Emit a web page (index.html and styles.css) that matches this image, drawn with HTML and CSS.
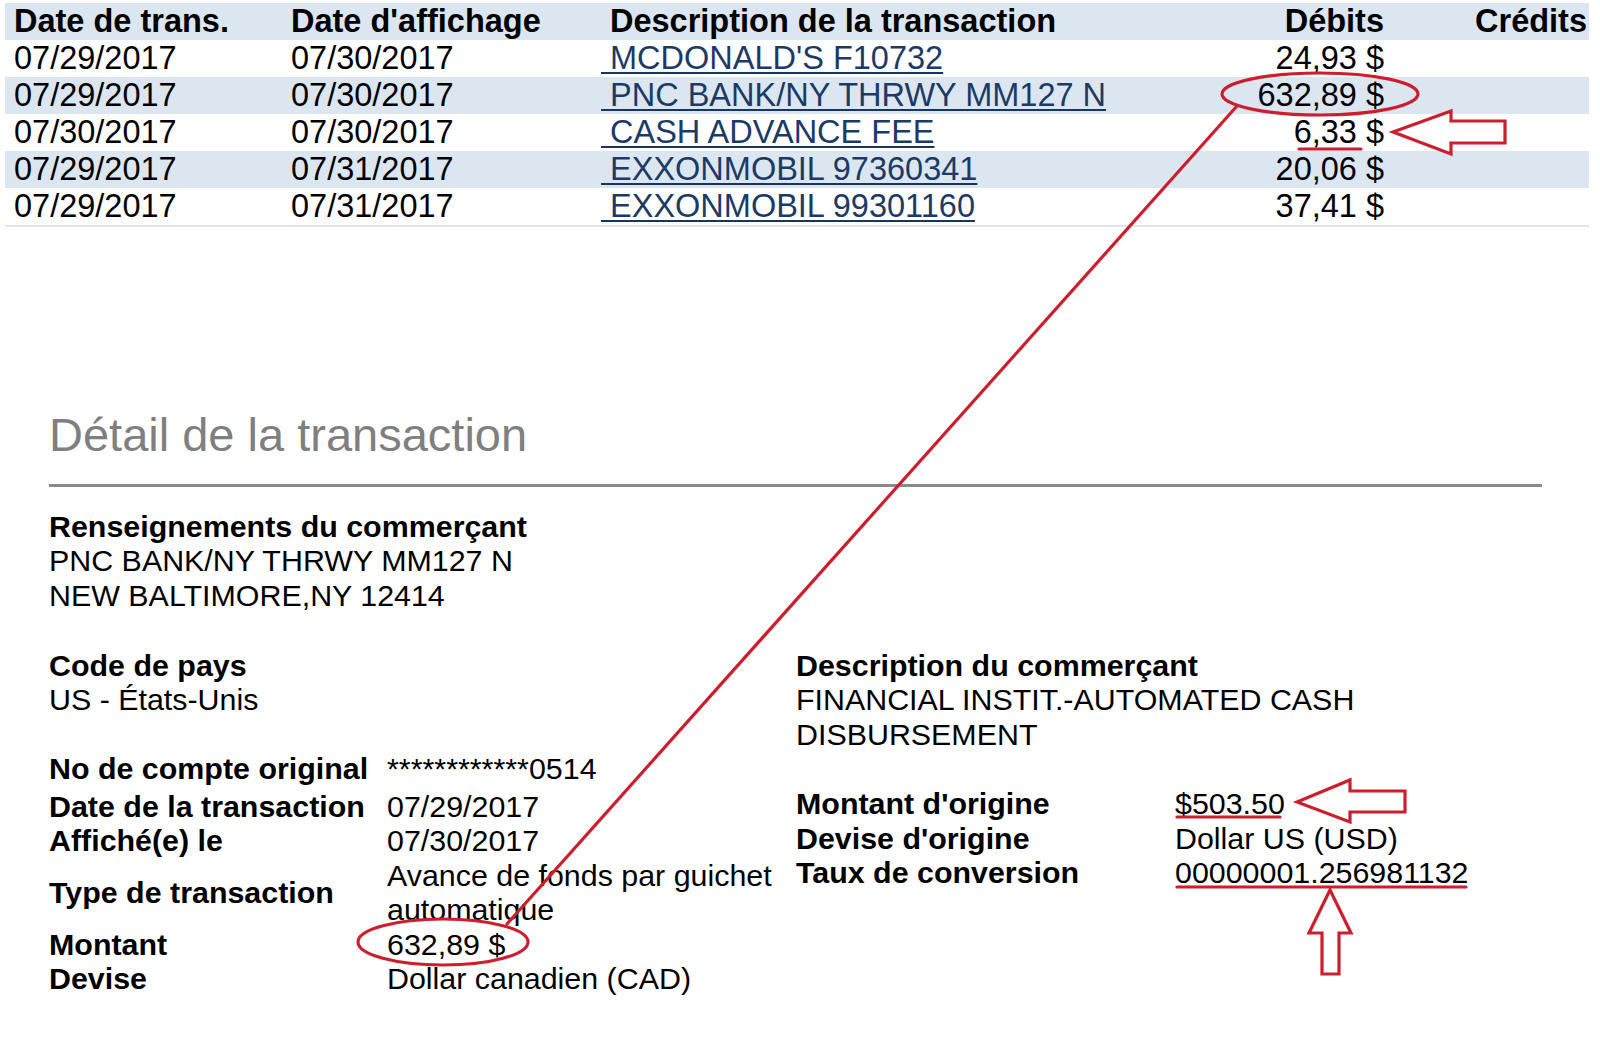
FILE: index.html
```html
<!DOCTYPE html>
<html lang="fr">
<head>
<meta charset="utf-8">
<title>Détail de la transaction</title>
<link rel="stylesheet" href="styles.css">
</head>
<body>
<div class="page">
  <table class="tx">
    <colgroup>
      <col class="c1"><col class="c2"><col class="c3"><col class="c4"><col class="c5">
    </colgroup>
    <thead>
      <tr>
        <th class="pad">Date de trans.</th>
        <th class="pad">Date d'affichage</th>
        <th class="pad">Description de la transaction</th>
        <th class="num">Débits</th>
        <th class="num">Crédits</th>
      </tr>
    </thead>
    <tbody>
      <tr>
        <td class="pad">07/29/2017</td><td class="pad">07/30/2017</td>
        <td><a href="#">&nbsp;MCDONALD'S F10732</a></td>
        <td class="num">24,93 $</td><td class="num"></td>
      </tr>
      <tr class="alt">
        <td class="pad">07/29/2017</td><td class="pad">07/30/2017</td>
        <td><a href="#">&nbsp;PNC BANK/NY THRWY MM127 N</a></td>
        <td class="num">632,89 $</td><td class="num"></td>
      </tr>
      <tr>
        <td class="pad">07/30/2017</td><td class="pad">07/30/2017</td>
        <td><a href="#">&nbsp;CASH ADVANCE FEE</a></td>
        <td class="num">6,33 $</td><td class="num"></td>
      </tr>
      <tr class="alt">
        <td class="pad">07/29/2017</td><td class="pad">07/31/2017</td>
        <td><a href="#">&nbsp;EXXONMOBIL 97360341</a></td>
        <td class="num">20,06 $</td><td class="num"></td>
      </tr>
      <tr>
        <td class="pad">07/29/2017</td><td class="pad">07/31/2017</td>
        <td><a href="#">&nbsp;EXXONMOBIL 99301160</a></td>
        <td class="num">37,41 $</td><td class="num"></td>
      </tr>
    </tbody>
  </table>

  <section class="detail">
    <h2 class="title">Détail de la transaction</h2>
    <div class="rule"></div>

    <div class="merchant">
      <div class="lbl">Renseignements du commerçant</div>
      <div>PNC BANK/NY THRWY MM127 N</div>
      <div>NEW BALTIMORE,NY 12414</div>
    </div>

    <div class="cols">
      <div class="col-left">
        <div class="field">
          <div class="lbl">Code de pays</div>
          <div>US - États-Unis</div>
        </div>
        <div class="grid grid-left">
          <div class="lbl first">No de compte original</div><div class="val first">************0514</div>
          <div class="lbl">Date de la transaction</div><div class="val">07/29/2017</div>
          <div class="lbl">Affiché(e) le</div><div class="val">07/30/2017</div>
          <div class="lbl">Type de transaction</div><div class="val">Avance de fonds par guichet automatique</div>
          <div class="lbl">Montant</div><div class="val">632,89 $</div>
          <div class="lbl">Devise</div><div class="val">Dollar canadien (CAD)</div>
        </div>
      </div>
      <div class="col-right">
        <div class="field">
          <div class="lbl">Description du commerçant</div>
          <div>FINANCIAL INSTIT.-AUTOMATED CASH<br>DISBURSEMENT</div>
        </div>
        <div class="grid grid-right">
          <div class="lbl">Montant d'origine</div><div class="val">$503.50</div>
          <div class="lbl">Devise d'origine</div><div class="val">Dollar US (USD)</div>
          <div class="lbl">Taux de conversion</div><div class="val">00000001.256981132</div>
        </div>
      </div>
    </div>
  </section>

  <svg class="marks" width="1600" height="1042" viewBox="0 0 1600 1042" xmlns="http://www.w3.org/2000/svg">
    <g fill="none" stroke="#cc1f2e" stroke-width="3.2" stroke-linejoin="miter" stroke-linecap="round">
      <ellipse cx="1320" cy="94" rx="98" ry="21"/>
      <line x1="1237" y1="106" x2="507" y2="924"/>
      <ellipse cx="443" cy="942" rx="85" ry="23"/>
      <line x1="1299" y1="149" x2="1361" y2="149"/>
      <polygon points="1393,132 1451,111 1451,121 1505,121 1505,143 1451,143 1451,154"/>
      <line x1="1177" y1="817" x2="1280" y2="817"/>
      <polygon points="1297,802 1350,780 1350,791 1405,791 1405,812 1350,812 1350,822"/>
      <line x1="1177" y1="887" x2="1466" y2="887"/>
      <polygon points="1330,890 1309,933 1322,933 1322,974 1339,974 1339,933 1351,933"/>
    </g>
  </svg>
</div>
</body>
</html>
```

FILE: styles.css
```css
html, body {
  margin: 0;
  padding: 0;
  background: #ffffff;
}

body {
  font-family: "Liberation Sans", Arial, sans-serif;
  color: #000;
}

.page {
  position: relative;
  width: 1600px;
  height: 1042px;
  overflow: hidden;
}

/* ---------- transactions table ---------- */
.tx {
  margin: 3px 0 0 5px;
  width: 1584px;
  border-collapse: collapse;
  table-layout: fixed;
  font-size: 32.5px;
  border-bottom: 2px solid #e1e5ea;
}

.tx .c1 { width: 277px; }
.tx .c2 { width: 319px; }
.tx .c3 { width: 499px; }
.tx .c4 { width: 286px; }
.tx .c5 { width: 203px; }

.tx th,
.tx td {
  height: 37px;
  line-height: 37px;
  padding: 0;
  white-space: nowrap;
  text-align: left;
  vertical-align: middle;
}

.tx th {
  font-weight: bold;
  background: #dce6f1;
}

.tx .alt td {
  background: #dce6f1;
}

.tx .pad {
  padding-left: 9px;
}

.tx .num {
  text-align: right;
  padding-right: 2px;
}

.tx a {
  color: #1b3a66;
  text-decoration: underline;
  text-decoration-thickness: 2px;
  text-underline-offset: 3px;
  text-decoration-color: #17365e;
}

/* ---------- detail ---------- */
.detail {
  padding: 0 58px 0 49px;
  font-size: 30.4px;
  line-height: 34.5px;
}

.title {
  margin: 181px 0 0 0;
  font-size: 47px;
  line-height: 54px;
  font-weight: normal;
  color: #7f7f7f;
}

.rule {
  margin-top: 22px;
  border-top: 3px solid #8a8a8a;
}

.merchant {
  margin-top: 21.5px;
  margin-bottom: 35.5px;
}

.lbl {
  font-weight: bold;
}

.cols {
  display: flex;
}

.col-left {
  width: 747px;
  flex: none;
}

.col-right {
  flex: 1;
}

.field {
  margin-bottom: 34.5px;
}

.col-right .field {
  margin-bottom: 35px;
}

.grid {
  display: grid;
  align-items: center;
}

.grid-left {
  grid-template-columns: 338px 400px;
}

.grid-right {
  grid-template-columns: 379px auto;
}

.grid .first {
  padding-bottom: 3px;
}

.marks {
  position: absolute;
  left: 0;
  top: 0;
  pointer-events: none;
}
```
